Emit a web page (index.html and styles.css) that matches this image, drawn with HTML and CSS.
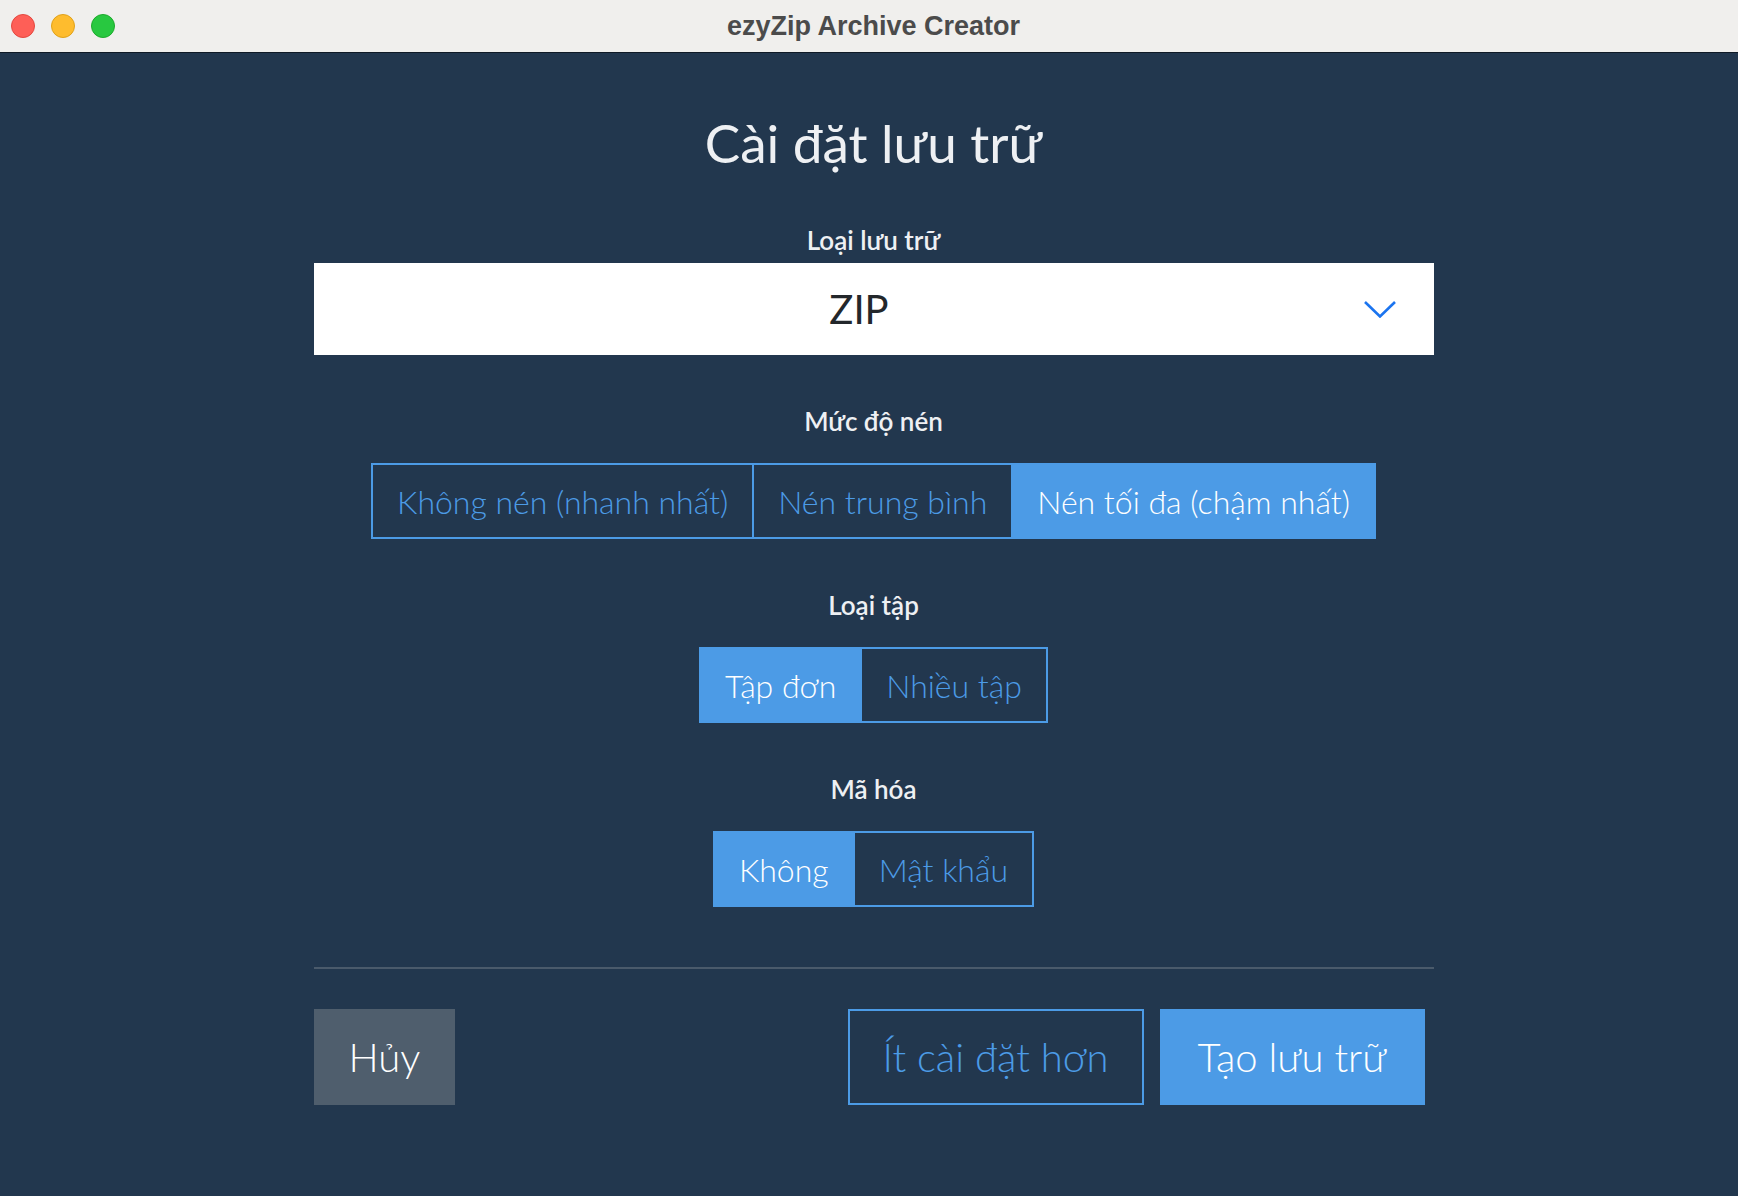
FILE: index.html
```html
<!DOCTYPE html>
<html lang="vi">
<head>
<meta charset="utf-8">
<title>ezyZip Archive Creator</title>
<link rel="stylesheet" href="styles.css">
</head>
<body>
<header class="titlebar">
  <div class="lights">
    <span class="light red"></span>
    <span class="light yellow"></span>
    <span class="light green"></span>
  </div>
  <div class="title">ezyZip Archive Creator</div>
  <div></div>
</header>
<main class="panel">
  <h1 class="heading">Cài đặt lưu trữ</h1>

  <section class="field field-first">
    <div class="label">Loại lưu trữ</div>
    <div class="select">
      <span class="select-value">ZIP</span>
      <svg class="chev" viewBox="0 0 32 17" width="32" height="17"><polyline points="1,1 16,15.5 31,1" fill="none" stroke="#1b74ef" stroke-width="2.6"/></svg>
    </div>
  </section>

  <section class="field">
    <div class="label">Mức độ nén</div>
    <div class="seg">
      <div class="opt">Không nén (nhanh nhất)</div>
      <div class="opt">Nén trung bình</div>
      <div class="opt active">Nén tối đa (chậm nhất)</div>
    </div>
  </section>

  <section class="field">
    <div class="label">Loại tập</div>
    <div class="seg">
      <div class="opt active">Tập đơn</div>
      <div class="opt">Nhiều tập</div>
    </div>
  </section>

  <section class="field">
    <div class="label">Mã hóa</div>
    <div class="seg">
      <div class="opt active">Không</div>
      <div class="opt">Mật khẩu</div>
    </div>
  </section>

  <div class="rule"></div>

  <div class="actions">
    <div class="btn cancel">Hủy</div>
    <div class="right-actions">
      <div class="btn outline">Ít cài đặt hơn</div>
      <div class="btn primary">Tạo lưu trữ</div>
    </div>
  </div>
</main>
</body>
</html>
```

FILE: styles.css
```css
html, body {
  margin: 0;
  padding: 0;
}
body {
  background: #22374e;
  min-height: 100vh;
  font-family: "Lato", "Noto Sans", sans-serif;
}
.titlebar {
  height: 52px;
  border-bottom: 1px solid #0f1a26;
  background: #f0efed;
  display: grid;
  grid-template-columns: 1fr auto 1fr;
  align-items: center;
}
.lights {
  display: flex;
  gap: 16px;
  padding-left: 11px;
}
.light {
  width: 22px;
  height: 22px;
  border-radius: 50%;
  border: 1px solid transparent;
}
.red { background: #fe5f57; border-color: #e3483f; }
.yellow { background: #febc2e; border-color: #e0a21a; }
.green { background: #28c840; border-color: #1daa2c; }
.title {
  font-family: "Liberation Sans", Arial, sans-serif;
  font-weight: 700;
  font-size: 27px;
  color: #4b4b4b;
  padding-left: 9px;
}
.panel {
  width: 1120px;
  margin: 0 auto;
  padding-left: 9px;
}
.heading {
  margin: 57px 0 0;
  font-size: 53px;
  line-height: 66px;
  font-weight: 400;
  text-align: center;
  color: #eef0f3;
}
.field {
  display: flex;
  flex-direction: column;
  align-items: center;
  margin-top: 50px;
}
.field-first {
  margin-top: 48px;
}
.label {
  font-family: "Lato Semibold", "Lato", "Noto Sans", sans-serif;
  font-size: 26px;
  line-height: 32px;
  font-weight: 600;
  color: #eef0f3;
  margin-bottom: 26px;
}
.field-first .label {
  margin-bottom: 7px;
}
.select {
  align-self: stretch;
  height: 92px;
  background: #ffffff;
  display: flex;
  align-items: center;
  padding-left: 41px;
}
.select-value {
  flex: 1;
  text-align: center;
  font-size: 40px;
  color: #23272b;
}
.chev {
  width: 32px;
  height: 17px;
  margin-right: 38px;
}
.seg {
  display: flex;
}
.opt {
  box-sizing: border-box;
  height: 76px;
  border: 2px solid #4c9be6;
  padding: 0 24px;
  display: flex;
  align-items: center;
  font-size: 32px;
  font-weight: 300;
  color: #4c9be6;
  white-space: nowrap;
}
.opt + .opt {
  margin-left: -2px;
}
.opt.active {
  background: #4c9be6;
  color: #ffffff;
}
.rule {
  height: 2px;
  background: #4a5a6b;
  margin-top: 60px;
}
.actions {
  display: flex;
  justify-content: space-between;
  margin-top: 40px;
}
.right-actions {
  display: flex;
  gap: 16px;
  margin-right: 9px;
}
.btn {
  box-sizing: border-box;
  height: 96px;
  padding: 0 35px;
  display: flex;
  align-items: center;
  font-size: 40px;
  font-weight: 300;
  white-space: nowrap;
}
.cancel {
  background: #4f5e6d;
  color: #ffffff;
}
.outline {
  border: 2px solid #4c9be6;
  color: #4c9be6;
  padding: 0 33px;
}
.primary {
  background: #4c9be6;
  color: #ffffff;
  padding: 0 38px;
}
```
